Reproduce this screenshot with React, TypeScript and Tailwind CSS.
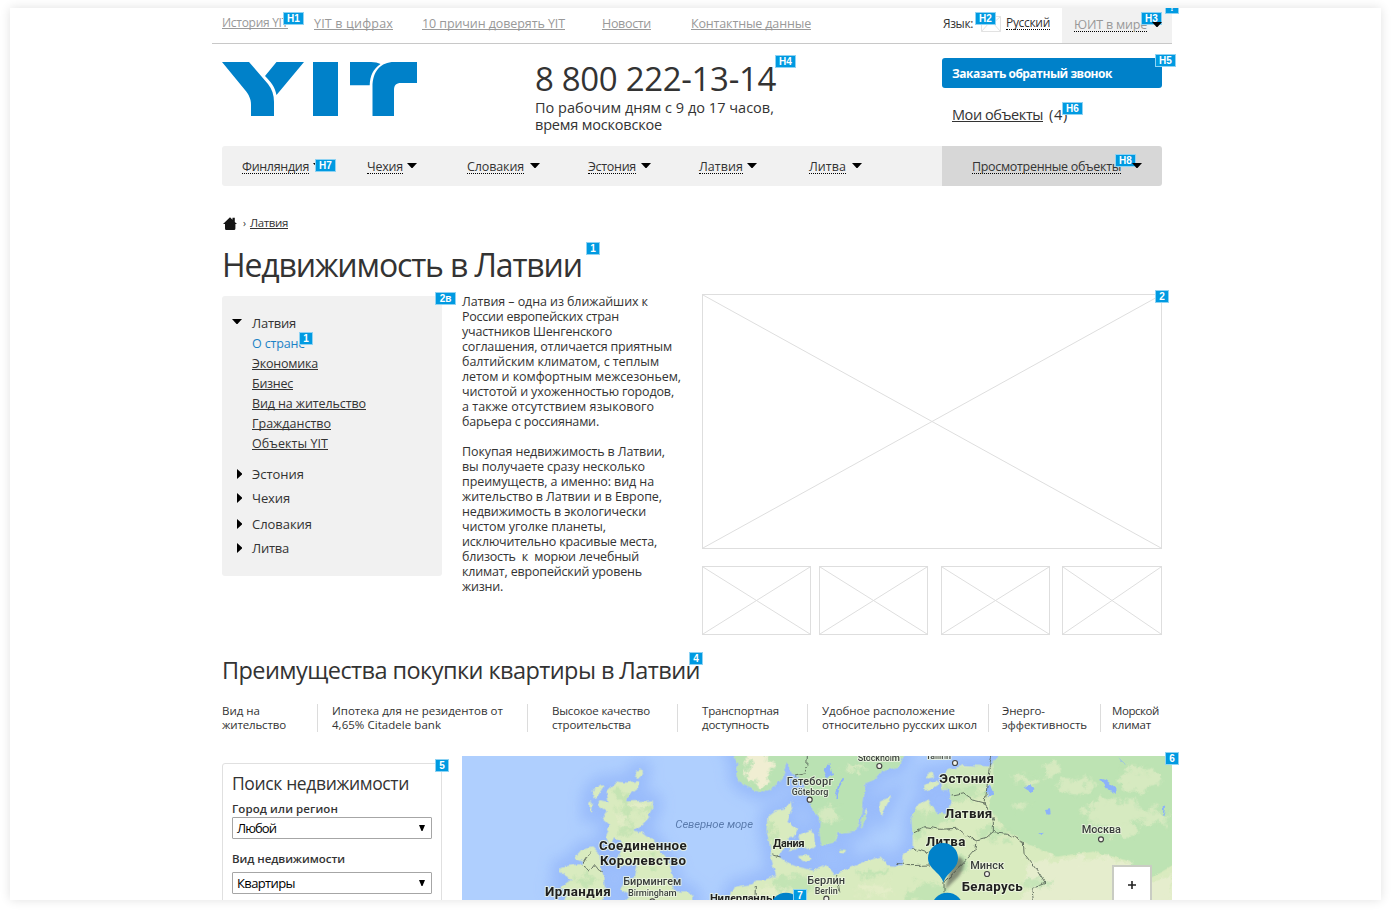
import React, { useLayoutEffect, useRef, useState } from "react";
import clsx from "clsx";

/** A line of text tracked so that it fills exactly `w` pixels. */
function T({ w, className, children }: { w: number; className?: string; children: string }) {
  const ref = useRef<HTMLSpanElement>(null);
  const [spacing, setSpacing] = useState<number | null>(null);
  useLayoutEffect(() => {
    if (ref.current && spacing === null) {
      const natural = ref.current.getBoundingClientRect().width;
      setSpacing((w - natural) / children.length);
    }
  }, [w, children, spacing]);
  return (
    <span
      ref={ref}
      className={clsx("inline-block shrink-0 whitespace-pre", className)}
      style={spacing === null ? undefined : { letterSpacing: spacing, width: w }}
    >
      {children}
    </span>
  );
}

function Badge({ className, children }: { className: string; children: string }) {
  return (
    <span
      className={clsx(
        "absolute z-10 flex h-[13px] items-center justify-center border border-[#8fd3f3] bg-[#009ae1] font-['Liberation_Sans',sans-serif] text-[10px] leading-[11px] font-bold text-white",
        children.length > 1 ? "w-[21px]" : "w-[14px]",
        className,
      )}
    >
      {children}
    </span>
  );
}

function Down({ className }: { className?: string }) {
  return (
    <svg width="10" height="5" viewBox="0 0 10 5" className={clsx("shrink-0", className)}>
      <path d="M0 0H10L5.5 5H4.5Z" fill="#000" />
    </svg>
  );
}

function Right() {
  return (
    <svg width="5" height="10" viewBox="0 0 5 10" className="mr-[10px] ml-[15px] shrink-0">
      <path d="M0 0L5 4.5V5.5L0 10Z" fill="#000" />
    </svg>
  );
}

function Placeholder({ className }: { className: string }) {
  return (
    <div className={clsx("shrink-0 border border-[#dedede]", className)}>
      <svg width="100%" height="100%" viewBox="0 0 100 100" preserveAspectRatio="none" className="block">
        <path d="M0 0L100 100M100 0L0 100" stroke="#dedede" strokeWidth="1" vectorEffect="non-scaling-stroke" />
      </svg>
    </div>
  );
}

function Logo() {
  return (
    <svg width="195" height="54" viewBox="0 0 195 54" fill="#0081c9" className="mt-[18px] shrink-0">
      <path d="M0 0H27L46 22C50 27 52 33 52 40V54H29V43C29 37 27 33 23 28Z" />
      <path d="M54.5 0H82L54.5 33C53 25 49 20 43 14Z" />
      <path d="M91 0H116V54H91Z" />
      <path d="M128 0H149C153 0 156 .8 158.500 2C151 7 148 14 147.700 23.300H128Z" />
      <path d="M172 0H195V21H179C174 21 172 23.500 172 28V54H150.500V25C150.500 9 159 0 172 0Z" />
    </svg>
  );
}

const link = "underline underline-offset-[1px] [text-decoration-skip-ink:none]";
const dotted = "border-b border-dotted border-black pt-[2px] leading-[13px]";

const countries = [
  { name: "Финляндия", w: 67, cls: "ml-[20px]", arrow: "ml-[4px]" },
  { name: "Чехия", w: 36, cls: "ml-[44px]", arrow: "ml-[4px]" },
  { name: "Словакия", w: 57, cls: "ml-[50px]", arrow: "ml-[6px]" },
  { name: "Эстония", w: 48, cls: "ml-[48px]", arrow: "ml-[5px]" },
  { name: "Латвия", w: 44, cls: "ml-[48px]", arrow: "ml-[4px]" },
  { name: "Литва", w: 37, cls: "ml-[52px]", arrow: "ml-[6px]" },
];

const sections: [string, number][] = [
  ["Экономика", 66],
  ["Бизнес", 41],
  ["Вид на жительство", 114],
  ["Гражданство", 79],
  ["Объекты YIT", 76],
];

const others = [
  { name: "Эстония", w: 52, cls: "mt-[10px]" },
  { name: "Чехия", w: 38, cls: "mt-[4px]" },
  { name: "Словакия", w: 60, cls: "mt-[6px]" },
  { name: "Литва", w: 37, cls: "mt-[4px]" },
];

const about: [string, number][][] = [
  [
    ["Латвия – одна из ближайших к", 186],
    ["России европейских стран", 157],
    ["участников Шенгенского", 150],
    ["соглашения, отличается приятным", 210],
    ["балтийским климатом, с теплым", 197],
    ["летом и комфортным межсезоньем,", 219],
    ["чистотой и ухоженностью городов,", 212],
    ["а также отсутствием языкового", 192],
    ["барьера с россиянами.", 137],
  ],
  [
    ["Покупая недвижимость в Латвии,", 203],
    ["вы получаете сразу несколько", 183],
    ["преимуществ, а именно: вид на", 192],
    ["жительство в Латвии и в Европе,", 200],
    ["недвижимость в экологически", 184],
    ["чистом уголке планеты,", 144],
    ["исключительно красивые места,", 195],
    ["близость  к  морюи лечебный", 177],
    ["климат, европейский уровень", 180],
    ["жизни.", 41],
  ],
];

const benefits: { cls: string; lines: [string, number][] }[] = [
  { cls: "w-[96px] border-r", lines: [["Вид на", 38], ["жительство", 64]] },
  { cls: "w-[210px] border-r pl-[14px]", lines: [["Ипотека для не резидентов от", 171], ["4,65% Citadele bank", 109]] },
  { cls: "w-[150px] border-r pl-[24px]", lines: [["Высокое качество", 98], ["строительства", 79]] },
  { cls: "w-[130px] border-r pl-[24px]", lines: [["Транспортная", 77], ["доступность", 67]] },
  { cls: "w-[181px] border-r pl-[14px]", lines: [["Удобное расположение", 133], ["относительно русских школ", 155]] },
  { cls: "w-[112px] border-r pl-[13px]", lines: [["Энерго-", 43], ["эффективность", 85]] },
  { cls: "w-[61px] pl-[11px]", lines: [["Морской", 47], ["климат", 39]] },
];

const labels: { t: string; x: number; y: number; w: number; s: number; b?: boolean }[] = [
  { t: "Соединенное", x: 417, y: 300, w: 263, s: 40, b: true },
  { t: "Королевство", x: 420, y: 346, w: 258, s: 40, b: true },
  { t: "Ирландия", x: 255, y: 438, w: 197, s: 40, b: true },
  { t: "Бирмингем", x: 490, y: 405, w: 174, s: 33 },
  { t: "Birmingham", x: 504, y: 439, w: 146, s: 28 },
  { t: "Гетеборг", x: 980, y: 104, w: 139, s: 33 },
  { t: "Göteborg", x: 995, y: 135, w: 110, s: 27 },
  { t: "Дания", x: 939, y: 290, w: 95, s: 34, b: true },
  { t: "Берлин", x: 1042, y: 402, w: 113, s: 33 },
  { t: "Berlin", x: 1064, y: 432, w: 69, s: 27 },
  { t: "Нидерланды", x: 750, y: 456, w: 196, s: 34, b: true },
  { t: "Stockholm", x: 1193, y: 34, w: 127, s: 28 },
  { t: "Tallinn", x: 1397, y: 26, w: 76, s: 27 },
  { t: "Эстония", x: 1438, y: 99, w: 164, s: 40, b: true },
  { t: "Латвия", x: 1454, y: 203, w: 143, s: 40, b: true },
  { t: "Литва", x: 1397, y: 287, w: 119, s: 40, b: true },
  { t: "Минск", x: 1531, y: 356, w: 101, s: 33 },
  { t: "Беларусь", x: 1505, y: 423, w: 183, s: 40, b: true },
  { t: "Москва", x: 1865, y: 250, w: 118, s: 33 },
];

const cities = [[1258, 48], [1049, 149], [1485, 39], [1581, 372], [1923, 268], [1099, 446], [577, 454]];

const lowland = [[560, 180, 30, 12], [500, 180, 22, 50], [480, 130, 18, 20], [500, 240, 24, 10], [600, 330, 30, 16], [370, 390, 36, 14], [930, 240, 16, 34]];
const forest = [[1400, 430, 60, 30], [1360, 220, 40, 50], [1500, 130, 70, 20], [1000, 400, 60, 26], [1240, 370, 46, 14], [1600, 250, 50, 20], [1440, 200, 40, 34], [1480, 340, 50, 20], [1730, 400, 50, 14]];
const pale = [[1960, 190, 90, 40], [1850, 110, 60, 22], [2040, 90, 60, 34], [1700, 90, 40, 14], [1680, 170, 18, 16], [1990, 240, 40, 20], [2080, 200, 50, 22], [1780, 60, 30, 14], [1180, 60, 34, 10], [1110, 190, 30, 20]];

const land = [
  "M470 95L500 98L537 93L535 112L505 135L500 155L520 153L578 152L580 172L565 205L545 225L520 240L545 248L560 260L580 268L590 290L625 335L640 380L635 405L645 425L685 424L700 440L700 460H490L512 435L484 420L490 402L525 380L532 350L512 335L505 350L470 348L478 315L490 290L480 270L462 262L450 290L436 255L450 225L428 205L440 185L412 165L418 150L445 155L440 125Z",
  "M400 118L425 102L430 110L412 140L404 145L395 130Z",
  "M388 155L396 150L394 182L388 185Z",
  "M528 62L545 58L546 75L536 84L527 78Z",
  "M300 350L360 343L372 336L344 325L368 298L400 292L418 310L422 345L430 378L436 420L425 460H310L324 425L300 412L335 388L298 366Z",
  "M818 10L835 40L830 80L845 103L880 120L905 128L945 110L968 82L980 35L1000 75L1022 85L1035 120L1048 150L1062 190L1083 215L1078 245L1085 288L1128 275L1128 250L1188 242L1208 180L1215 100L1245 88L1265 65L1320 48L1335 10Z",
  "M1260 155L1295 138L1280 165L1265 195L1258 180Z",
  "M1217 177L1222 180L1206 235L1200 230Z",
  "M922 200L945 182L975 175L995 152L998 170L982 215L1012 240L1000 262L978 268L968 300L955 318L980 338L1010 350L1060 362L1098 345L1122 375L1165 355L1210 337L1262 320L1282 345L1325 350L1328 312L1358 296L1358 250L1355 205L1375 162L1405 148L1432 190L1465 193L1475 150L1468 118L1445 120L1445 85L1460 62L1510 45L1590 50L1620 10H2150V460H800L825 410L878 402L888 388L918 388L948 375L935 330L928 280L920 240Z",
  "M1015 255L1050 240L1065 250L1068 285L1050 300L1025 290Z",
  "M985 275L1008 278L1010 298L988 300Z",
  "M1010 318L1050 315L1058 328L1030 334Z",
  "M1392 105L1430 92L1440 100L1410 118L1394 122Z",
  "M1398 72L1418 68L1422 82L1402 86Z",
  "M1140 297L1158 300L1155 311L1142 308Z",
].join("");

function Blobs({ data, fill, opacity = 0.7 }: { data: number[][]; fill: string; opacity?: number }) {
  return (
    <g fill={fill} opacity={opacity}>
      {data.map(([x, y, rx, ry]) => (
        <ellipse key={`${x}-${y}`} cx={x} cy={y} rx={rx} ry={ry} />
      ))}
    </g>
  );
}

function MapView() {
  return (
    <svg width="710" height="144" viewBox="6 18 2130 432" className="block">
      <defs>
        <filter id="coast" filterUnits="userSpaceOnUse" x="-20" y="-20" width="2190" height="510">
          <feTurbulence type="fractalNoise" baseFrequency="0.05" numOctaves="3" seed="4" />
          <feDisplacementMap in="SourceGraphic" scale="14" xChannelSelector="R" yChannelSelector="G" />
        </filter>
        <filter id="patch" filterUnits="userSpaceOnUse" x="-20" y="-20" width="2190" height="510">
          <feGaussianBlur stdDeviation="4" result="b" />
          <feTurbulence type="fractalNoise" baseFrequency="0.03" numOctaves="4" seed="9" result="n" />
          <feDisplacementMap in="b" in2="n" scale="60" xChannelSelector="R" yChannelSelector="G" />
        </filter>
        <filter id="soft" filterUnits="userSpaceOnUse" x="-60" y="-60" width="2260" height="580">
          <feGaussianBlur stdDeviation="20" />
        </filter>
        <filter id="shade" x="-20%" y="-20%" width="140%" height="140%">
          <feGaussianBlur stdDeviation="5" />
        </filter>
        <clipPath id="landClip">
          <path d={land} />
        </clipPath>
      </defs>
      <rect x="6" y="18" width="2130" height="432" fill="#afcffe" />
      <path d={land} fill="#94b7fa" stroke="#94b7fa" strokeWidth="50" opacity="0.8" filter="url(#soft)" />
      <g filter="url(#coast)">
        <path d={land} fill="#d9ebbf" />
        <g clipPath="url(#landClip)">
          <path d="M818 10H1340L1300 80L1215 130L1220 300L1085 300L1040 120L900 130L820 110Z" fill="#bae2b3" />
          <path d="M1600 10H2150V340L2060 390L2000 330L1900 305L1790 320L1700 280L1640 240L1590 180Z" fill="#bde3b3" />
          <path d="M1440 60L1600 40V110L1460 125Z" fill="#cfe8bc" />
          <g filter="url(#patch)">
            <path d="M1700 340L1900 320L2010 340L2060 400L2140 370V470H1690Z" fill="#e5edcd" />
            <path d="M870 0H925L930 90L895 115L860 70Z" fill="#f0eed2" />
            <Blobs data={lowland} fill="#b8dfac" opacity={0.6} />
            <Blobs data={forest} fill="#bae1b0" />
            <Blobs data={pale} fill="#dcecc4" opacity={0.8} />
            <Blobs data={[[530, 165, 35, 10], [490, 205, 20, 16], [1240, 420, 60, 14], [920, 425, 60, 14]]} fill="#e7eecb" />
          </g>
        </g>
      </g>
      <g fill="#8cb2fa" filter="url(#coast)">
        <path d="M1088 60L1108 42L1120 75L1100 85Z" />
        <path d="M1126 140L1134 108L1150 80L1152 88L1138 116L1130 143Z" />
        <path d="M1920 85L1938 90L1965 112L1968 128L1945 122Z" />
        <path d="M1694 115L1710 102L1725 116L1712 126Z" />
        <path d="M1578 110L1590 104L1600 130L1584 142Z" />
        <path d="M1975 22L1995 42L1985 36Z" />
        <path d="M2108 165L2116 168L2110 200Z" />
        <path d="M1755 180L1770 178L1772 193L1760 194Z" />
        <path d="M1738 250L1748 248L1746 256Z" />
      </g>
      <g fill="none" stroke="#4f5b50" strokeWidth="2.500" filter="url(#coast)">
        <path d="M1042 18L1040 50L1030 72L1005 78" />
        <path d="M1595 20L1588 50L1582 100L1575 160L1600 210L1600 245" />
        <path d="M1475 135L1510 128L1540 150L1578 160" />
        <path d="M1362 245L1395 230L1440 238L1490 235L1515 255L1548 270L1580 262L1600 245L1640 250L1690 275L1692 310L1730 360L1755 400L1715 415L1720 450" />
        <path d="M1548 270L1545 300L1510 340L1480 370L1452 395V430" />
        <path d="M1312 340L1350 347L1410 345" />
        <path d="M1355 293L1400 308L1420 300" />
        <path d="M936 315L962 321" />
        <path d="M395 305L378 325L366 345L390 360L402 343L418 362L428 365" />
        <path d="M886 405L885 450M1130 375L1140 430" />
      </g>
      <g fontFamily="Roboto, sans-serif" stroke="#eef5e2" strokeOpacity="0.8" strokeWidth="6" strokeLinejoin="round" paintOrder="stroke">
        {labels.map((l) => (
          <text key={l.t} x={l.x} y={l.y} fontSize={l.s} fontWeight={l.b ? 700 : 500} textLength={l.w} fill={l.b ? "#20201f" : "#3b3f3e"}>
            {l.t}
          </text>
        ))}
      </g>
      <text x="646" y="233" fontFamily="Roboto, sans-serif" fontStyle="italic" fontSize="34" fill="#5b7cae" textLength="233">
        Северное море
      </text>
      <g fill="#f4f4ec" stroke="#444" strokeWidth="3.500">
        {cities.map(([x, y]) => (
          <circle key={x} cx={x} cy={y} r="7.500" />
        ))}
      </g>
      <path d="M1454 420L1470 360L1494 320C1520 325 1515 355 1495 380Z" fill="#333" opacity="0.5" filter="url(#shade)" />
      <path d="M1450 398C1444 368 1404 358 1404 324A45 45 0 0 1 1494 324C1494 358 1458 368 1450 398Z" fill="#0081c9" />
      <ellipse cx="1462" cy="472" rx="46" ry="44" fill="#0081c9" />
      <ellipse cx="978" cy="472" rx="46" ry="44" fill="#0081c9" />
    </svg>
  );
}

function Select({ className, value, w }: { className?: string; value: string; w: number }) {
  return (
    <div className={clsx("flex h-[22px] w-[200px] items-center justify-between rounded-[1px] border border-[#a6a6a6] pr-[6px] pl-[4px] text-black", className)}>
      <T w={w} className="text-[13px] leading-[20px]">{value}</T>
      <svg width="6" height="6" viewBox="0 0 6 6" className="mb-px">
        <path d="M0 0H6L3.500 6H2.500Z" />
      </svg>
    </div>
  );
}

export default function App() {
  return (
    <div className="h-[912px] w-[1391px] overflow-hidden bg-white pt-[8px] font-['Open_Sans','Noto_Sans',sans-serif] text-[#333]">
      <div className="relative ml-[10px] h-[892px] w-[1371px] bg-white shadow-[0_0_10px_rgba(0,0,0,0.12)]">
        <div className="ml-[202px] h-[892px] w-[970px] overflow-hidden">
          <header className="w-[960px]">
            <div className="relative flex h-[36px] items-start border-b border-[#c8c8c8] pl-[10px] text-[12.5px] leading-[20px] text-[#999]">
              <T w={66} className={clsx("mt-[5px] text-[12px]", link)}>История YIT</T>
              <T w={79} className={clsx("mt-[6px] ml-[26px]", link)}>YIT в цифрах</T>
              <T w={143} className={clsx("mt-[6px] ml-[29px]", link)}>10 причин доверять YIT</T>
              <T w={49} className={clsx("mt-[6px] ml-[37px]", link)}>Новости</T>
              <T w={120} className={clsx("mt-[6px] ml-[40px]", link)}>Контактные данные</T>
              <T w={30} className="mt-[6px] ml-[132px] text-[12px] text-[#333]">Язык:</T>
              <svg width="20" height="16" viewBox="0 0 20 16" fill="none" stroke="#e2e2e2" className="mt-[8px] ml-[8px] shrink-0">
                <path d="M.5 .5H19.500V15.500H.5ZM.5 .5L10 9L19.500 .5M.5 15.500L8 7M19.500 15.500L12 7" />
              </svg>
              <T w={44} className={clsx("mt-[6px] ml-[5px] text-[12px] text-[#333]", dotted)}>Русский</T>
              <div className="ml-[12px] flex h-[35px] w-[110px] bg-[#f1f1f1] pl-[12px]">
                <T w={73} className={clsx("mt-[8px] self-start", dotted)}>ЮИТ в мире</T>
                <Down className="relative z-20 mt-[14px] ml-[5px]" />
              </div>
              <Badge className="top-[4px] left-[71px]">H1</Badge>
              <Badge className="top-[4px] left-[763px]">H2</Badge>
              <Badge className="top-[4px] left-[929px]">H3</Badge>
              <Badge className="top-[-7px] left-[953px]">?</Badge>
            </div>

            <div className="relative flex h-[102px] pl-[10px]">
              <Logo />
              <div className="mt-[15px] ml-[118px] flex w-[407px] flex-col items-start">
                <T w={241} className="text-[33px] leading-[40px]">8 800 222-13-14</T>
                <T w={239} className="text-[14.5px] leading-[17px]">По рабочим дням с 9 до 17 часов,</T>
                <T w={127} className="text-[14.5px] leading-[17px]">время московское</T>
              </div>
              <div className="mt-[14px] flex w-[220px] flex-col">
                <div className="flex h-[30px] items-center rounded-[3px] bg-[#0081c9] pt-[2px] pl-[10px] text-white">
                  <T w={160} className="text-[12px] leading-[20px] font-bold">Заказать обратный звонок</T>
                </div>
                <div className="mt-[17px] flex pl-[10px] text-[14.5px] leading-[20px]">
                  <T w={91} className={link}>Мои объекты</T>
                  <T w={19} className="ml-[6px]">(4)</T>
                </div>
              </div>
              <Badge className="top-[11px] left-[563px]">H4</Badge>
              <Badge className="top-[10px] left-[943px]">H5</Badge>
              <Badge className="top-[58px] left-[850px]">H6</Badge>
            </div>

            <nav className="relative mx-[10px] flex h-[40px] w-[940px] text-[12.5px]">
              <div className="flex w-[720px] items-start rounded-l-[3px] bg-[#f1f1f1]">
                {countries.map((c) => (
                  <div key={c.name} className={clsx("flex", c.cls)}>
                    <T w={c.w} className={clsx("mt-[12px]", dotted)}>{c.name}</T>
                    <Down className={clsx("mt-[17px]", c.arrow)} />
                  </div>
                ))}
              </div>
              <div className="flex w-[220px] items-start rounded-r-[3px] bg-[#d7d7d7] pl-[30px]">
                <T w={149} className={clsx("mt-[12px]", dotted)}>Просмотренные объекты</T>
                <Down className="relative z-20 mt-[17px] ml-[11px]" />
              </div>
              <Badge className="top-[13px] left-[93px]">H7</Badge>
              <Badge className="top-[8px] left-[893px]">H8</Badge>
            </nav>
          </header>

          <div className="mt-[29px] flex h-[16px] items-center pl-[11px] text-[11.5px] leading-[16px]">
            <svg width="14" height="13" viewBox="0 0 14 13" fill="#151515">
              <path d="M7 .3L9.500 2.700V.8H11.800V4.900L14 7H12.400V11.500Q12.400 13 11 13H3.200Q2 13 2 11.500V7H0Z" />
            </svg>
            <span className="ml-[6px] w-[7px] text-[10px]">›</span>
            <T w={38} className={link}>Латвия</T>
          </div>

          <div className="relative mt-[14px] flex h-[40px] pl-[10px]">
            <T w={360} className="text-[32px] leading-[40px]">Недвижимость в Латвии</T>
            <Badge className="top-[-3px] left-[374px]">1</Badge>
          </div>

          <main className="relative mt-[9px] flex h-[341px] pl-[10px]">
            <aside className="mt-[2px] flex h-[280px] w-[220px] flex-col rounded-[3px] bg-[#f1f1f1] pt-[17px] text-[12.5px] leading-[20px]">
              <div className="flex h-[20px]">
                <Down className="mt-[6px] mr-[10px] ml-[10px]" />
                <T w={44} className="text-[13px]">Латвия</T>
              </div>
              <div className="mt-px ml-[30px] flex flex-col items-start">
                <T w={53} className="text-[#1b82c6]">О стране</T>
                {sections.map(([name, w]) => (
                  <T key={name} w={w} className={link}>{name}</T>
                ))}
              </div>
              {others.map((o) => (
                <div key={o.name} className={clsx("flex h-[20px] items-center text-[13px]", o.cls)}>
                  <Right />
                  <T w={o.w}>{o.name}</T>
                </div>
              ))}
            </aside>

            <article className="ml-[20px] w-[240px] text-[12.5px] leading-[15px]">
              {about.map((lines, i) => (
                <div key={i} className="mb-[15px] flex flex-col items-start">
                  {lines.map(([text, w]) => (
                    <T key={text} w={w}>{text}</T>
                  ))}
                </div>
              ))}
            </article>

            <div className="w-[460px]">
              <Placeholder className="h-[255px] w-[460px]" />
              <div className="mt-[17px] flex">
                <Placeholder className="h-[69px] w-[109px]" />
                <Placeholder className="ml-[8px] h-[69px] w-[109px]" />
                <Placeholder className="ml-[13px] h-[69px] w-[109px]" />
                <Placeholder className="ml-[12px] h-[69px] w-[100px]" />
              </div>
            </div>
            <Badge className="top-[-2px] left-[223px]">2в</Badge>
            <Badge className="top-[38px] left-[87px]">1</Badge>
            <Badge className="top-[-4px] left-[943px]">2</Badge>
          </main>

          <div className="relative mt-[20px] flex h-[30px] pl-[10px]">
            <T w={478} className="text-[23.5px] leading-[30px]">Преимущества покупки квартиры в Латвии</T>
            <Badge className="top-[-3px] left-[477px]">4</Badge>
          </div>

          <div className="mt-[19px] flex h-[28px] pl-[10px] text-[11.5px] leading-[14px]">
            {benefits.map((b) => (
              <div key={b.cls} className={clsx("flex shrink-0 flex-col items-start border-[#dcdcdc]", b.cls)}>
                {b.lines.map(([text, w]) => (
                  <T key={text} w={w}>{text}</T>
                ))}
              </div>
            ))}
          </div>

          <div className="relative mt-[24px] flex pl-[10px]">
            <form className="mt-[7px] flex h-[200px] w-[220px] flex-col items-start rounded-[3px] border border-[#e0e0e0] pt-[7px] pl-[9px]">
              <T w={177} className="text-[17.5px] leading-[24px]">Поиск недвижимости</T>
              <T w={106} className="mt-[6px] text-[11.5px] leading-[16px] font-semibold">Город или регион</T>
              <Select value="Любой" w={39} />
              <T w={113} className="mt-[12px] text-[11.5px] leading-[16px] font-semibold">Вид недвижимости</T>
              <Select className="mt-[5px]" value="Квартиры" w={58} />
            </form>
            <div className="relative ml-[20px] h-[144px] w-[710px] overflow-hidden">
              <MapView />
              <button className="absolute top-[109px] left-[650px] flex h-[42px] w-[40px] items-start justify-center border-2 border-[#c9ccc3] bg-white pt-[14px]">
                <svg width="8" height="8" viewBox="0 0 8 8">
                  <path d="M0 4H8M4 0V8" stroke="#222" strokeWidth="1.600" />
                </svg>
              </button>
            </div>
            <Badge className="top-[3px] left-[223px]">5</Badge>
            <Badge className="top-[-4px] left-[953px]">6</Badge>
            <Badge className="top-[133px] left-[581px]">7</Badge>
          </div>
        </div>
      </div>
    </div>
  );
}
